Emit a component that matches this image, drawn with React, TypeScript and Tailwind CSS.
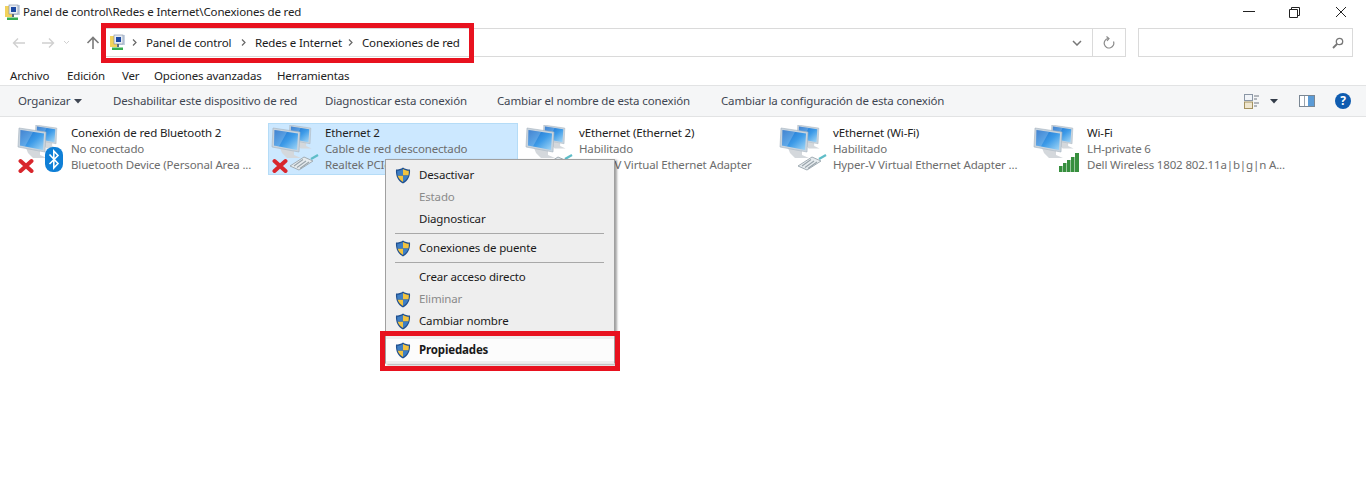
import React from "react";

type Badge = "bluetooth" | "plug" | "wifi";

interface Connection {
    name: string;
    status: string;
    device: string;
    failed: boolean;
    badge: Badge;
    selected?: boolean;
}

const connections: Connection[] = [
    { name: "Conexión de red Bluetooth 2", status: "No conectado", device: "Bluetooth Device (Personal Area ...", failed: true, badge: "bluetooth" },
    { name: "Ethernet 2", status: "Cable de red desconectado", device: "Realtek PCIe GbE Family Controller", failed: true, badge: "plug", selected: true },
    { name: "vEthernet (Ethernet 2)", status: "Habilitado", device: "Hyper-V Virtual Ethernet Adapter", failed: false, badge: "plug" },
    { name: "vEthernet (Wi-Fi)", status: "Habilitado", device: "Hyper-V Virtual Ethernet Adapter ...", failed: false, badge: "plug" },
    { name: "Wi-Fi", status: "LH-private 6", device: "Dell Wireless 1802 802.11a|b|g|n A...", failed: false, badge: "wifi" },
];

const Monitor: React.FC<{ x: number; y: number; s: number; id: string }> = ({ x, y, s, id }) => (
    <g transform={`translate(${x} ${y}) scale(${s})`}>
        <path d="M8 20 L22 23 L22 27 L29 30 L15 30 L10 25 Z" fill="#d4d8dc" />
        <path d="M1 0 L28 4 L27 24 L0 19 Z" fill="#c9d4de" stroke="#a5b2bd" strokeWidth="0.6" />
        <path d="M2.5 2 L26 5.5 L25 22 L2 17.5 Z" fill={`url(#${id})`} />
        <path d="M2.5 2 L15 4 L7 18.5 L2 17.5 Z" fill="#ffffff" opacity="0.2" />
    </g>
);

const NetworkIcon: React.FC<{ failed: boolean; badge: Badge; uid: string }> = ({ failed, badge, uid }) => (
    <svg width="48" height="48" viewBox="0 0 48 48" className="shrink-0">
        <defs>
            <linearGradient id={`scr${uid}`} x1="0" y1="0" x2="1" y2="1">
                <stop offset="0" stopColor="#1464c4" />
                <stop offset="0.55" stopColor="#3d9be8" />
                <stop offset="1" stopColor="#a6d8f6" />
            </linearGradient>
        </defs>
        <Monitor x={18} y={0} s={0.78} id={`scr${uid}`} />
        <Monitor x={1} y={3} s={1} id={`scr${uid}`} />
        {badge === "bluetooth" && (
            <g>
                <rect x="28" y="22" width="18" height="25" rx="8" fill="#0f7fd6" />
                <path d="M32.5 29.5 L41 38.5 L36.8 43 L36.8 26 L41 30.5 L32.5 39" fill="none" stroke="#ffffff" strokeWidth="1.6" />
            </g>
        )}
        {badge === "plug" && (
            <g>
                <path d="M19 41 L28 45 L42 36 L33 32 Z" fill="#e6ebee" stroke="#a2adb4" strokeWidth="1" />
                <path d="M23 41 L32 34.5 M26 42.5 L35 36 M29 43.5 L38 37" stroke="#9aa5ac" strokeWidth="1.2" />
                <path d="M40 34 L47 30" stroke="#5fbdc8" strokeWidth="2.2" />
            </g>
        )}
        {badge === "wifi" && (
            <g fill="#378f3e">
                <rect x="26" y="41" width="3.5" height="6" />
                <rect x="30" y="38" width="3.5" height="9" />
                <rect x="34" y="35" width="3.5" height="12" />
                <rect x="38" y="32" width="3.5" height="15" />
                <rect x="42" y="28" width="4" height="19" />
            </g>
        )}
        {failed && (
            <path d="M3.5 36 L14.5 46 M14.5 36 L3.5 46" stroke="#d8262c" strokeWidth="4" strokeLinecap="round" />
        )}
    </svg>
);

const FolderIcon: React.FC = () => (
    <svg width="17" height="17" viewBox="0 0 17 17">
        <rect x="1" y="2" width="8" height="11" fill="#f2d25c" />
        <rect x="10" y="1" width="6" height="10" fill="#c7d3e3" />
        <rect x="5" y="1" width="9" height="9" fill="#e7ecf3" stroke="#7d8ba0" strokeWidth="0.6" />
        <rect x="7" y="3" width="5" height="5" fill="#1c49a3" />
        <path d="M8 10 h2 v3 h-2 Z" fill="#5c6a7c" />
        <rect x="3" y="13.5" width="11" height="2.5" fill="#35ad4f" />
    </svg>
);

const Shield: React.FC = () => (
    <svg width="16" height="17" viewBox="0 0 16 17" className="shrink-0">
        <path d="M8 0.5 C10 2 12.5 2.5 15 2.5 C15.5 9 13 14 8 16.5 C3 14 0.5 9 1 2.5 C3.5 2.5 6 2 8 0.5 Z" fill="#20508f" />
        <path d="M8 2 C9.8 3.2 11.8 3.7 13.8 3.8 C13.9 5.5 13.8 7 13.4 8.5 L8 8.5 Z" fill="#f2c33f" />
        <path d="M2.6 8.5 L8 8.5 L8 15 C5 13.3 3.3 11 2.6 8.5 Z" fill="#f2c33f" />
        <path d="M8 2 C6.2 3.2 4.2 3.7 2.2 3.8 C2.1 5.5 2.2 7 2.6 8.5 L8 8.5 Z" fill="#3f7fc4" />
        <path d="M13.4 8.5 L8 8.5 L8 15 C11 13.3 12.7 11 13.4 8.5 Z" fill="#3f7fc4" />
    </svg>
);

const Crumb: React.FC = () => (
    <svg width="5" height="7" viewBox="0 0 5 7" className="shrink-0">
        <path d="M1 0.5 L4 3.5 L1 6.5" fill="none" stroke="#666" strokeWidth="1.2" />
    </svg>
);

const MenuRow: React.FC<{ label: string; shield?: boolean; disabled?: boolean }> = ({ label, shield, disabled }) => (
    <div className="flex h-[22px] items-center">
        <div className="flex w-[33px] justify-end pr-[8px]">{shield && <Shield />}</div>
        <span className={disabled ? "text-[#8a8a8a]" : "text-[#1a1a1a]"}>{label}</span>
    </div>
);

const Separator: React.FC = () => (
    <div className="flex h-[7px] items-center pr-[10px] pl-[9px]">
        <div className="h-px w-full bg-[#a8a8a8]" />
    </div>
);

export default function App() {
    return (
        <div className="relative h-[498px] w-[1366px] overflow-hidden bg-white font-['Noto_Sans',sans-serif] text-[11.5px] leading-4 tracking-[-0.15px] text-[#222]">
            {/* title bar */}
            <div className="flex h-[24px] items-center pl-[4px]">
                <FolderIcon />
                <span className="ml-[2px]">Panel de control\Redes e Internet\Conexiones de red</span>
                <div className="ml-auto flex items-center pr-[19px]">
                    <svg width="12" height="12" viewBox="0 0 12 12">
                        <path d="M0 5.5 H12" stroke="#222" strokeWidth="1" />
                    </svg>
                    <svg width="11" height="11" viewBox="0 0 11 11" className="ml-[34px]">
                        <path d="M0.5 2.5 H8.5 V10.5 H0.5 Z M2.5 2.5 V0.5 H10.5 V8.5 H8.5" fill="none" stroke="#222" />
                    </svg>
                    <svg width="12" height="12" viewBox="0 0 12 12" className="ml-[35px]">
                        <path d="M1 1 L11 11 M11 1 L1 11" stroke="#222" strokeWidth="1" />
                    </svg>
                </div>
            </div>

            {/* address row */}
            <div className="mt-[4px] flex h-[29px] items-center">
                <div className="flex w-[104px] items-center">
                    <svg width="14" height="12" viewBox="0 0 14 12" className="ml-[12px]">
                        <path d="M13 6 H2 M6 1.5 L1.5 6 L6 10.5" fill="none" stroke="#d0d0d0" strokeWidth="1.4" />
                    </svg>
                    <svg width="14" height="12" viewBox="0 0 14 12" className="ml-[15px]">
                        <path d="M1 6 H12 M8 1.5 L12.5 6 L8 10.5" fill="none" stroke="#d0d0d0" strokeWidth="1.4" />
                    </svg>
                    <svg width="7" height="5" viewBox="0 0 7 5" className="ml-[8px]">
                        <path d="M1 1 L3.5 3.5 L6 1" fill="none" stroke="#d0d0d0" />
                    </svg>
                    <svg width="14" height="13" viewBox="0 0 14 13" className="ml-[16px]">
                        <path d="M7 13 V2 M1.5 7 L7 1.5 L12.5 7" fill="none" stroke="#7b7b7b" strokeWidth="1.6" />
                    </svg>
                </div>
                <div className="flex h-full w-[1022px] items-center border border-[#dadada]">
                    <div className="ml-[4px] flex items-center">
                        <FolderIcon />
                    </div>
                    <div className="ml-[6px]"><Crumb /></div>
                    <span className="ml-[9px] w-[95px] text-[#1a1a1a]">Panel de control</span>
                    <Crumb />
                    <span className="ml-[9px] w-[93px] text-[#1a1a1a]">Redes e Internet</span>
                    <Crumb />
                    <span className="ml-[9px] text-[#1a1a1a]">Conexiones de red</span>
                    <svg width="10" height="6" viewBox="0 0 10 6" className="ml-auto mr-[10px]">
                        <path d="M1 1 L5 5 L9 1" fill="none" stroke="#777" strokeWidth="1.5" />
                    </svg>
                    <div className="flex h-full w-[33px] items-center justify-center border-l border-[#dadada]">
                        <svg width="12" height="13" viewBox="0 0 12 13">
                            <path d="M5 2.5 A4.8 4.8 0 1 0 10.5 5.5 M3.5 0.5 L6 2.5 L4 5" fill="none" stroke="#8a8a8a" strokeWidth="1.2" />
                        </svg>
                    </div>
                </div>
                <div className="ml-[12px] flex h-full w-[215px] items-center justify-end border border-[#dadada] pr-[8px]">
                    <svg width="12" height="12" viewBox="0 0 12 12">
                        <circle cx="7.5" cy="4.5" r="3.2" fill="none" stroke="#777" strokeWidth="1.3" />
                        <path d="M5 7 L1 11" stroke="#777" strokeWidth="1.8" />
                    </svg>
                </div>
            </div>

            {/* menu bar */}
            <div className="mt-[9px] flex h-[19px] items-center pl-[10px] text-[#222]">
                <span className="w-[57px]">Archivo</span>
                <span className="w-[55px]">Edición</span>
                <span className="w-[32px]">Ver</span>
                <span className="w-[123px]">Opciones avanzadas</span>
                <span>Herramientas</span>
            </div>

            {/* toolbar */}
            <div className="flex h-[32px] items-center border-y border-[#e2e3e4] bg-[#f5f6f7] pl-[18px] text-[#3f4652]">
                <span className="w-[56px]">Organizar</span>
                <svg width="8" height="5" viewBox="0 0 8 5">
                    <path d="M0 0 H8 L4 4.5 Z" fill="#3f4652" />
                </svg>
                <span className="ml-[31px] w-[212px]">Deshabilitar este dispositivo de red</span>
                <span className="w-[172px]">Diagnosticar esta conexión</span>
                <span className="w-[224px]">Cambiar el nombre de esta conexión</span>
                <span>Cambiar la configuración de esta conexión</span>
                <div className="ml-auto flex items-center pr-[15px]">
                    <svg width="16" height="15" viewBox="0 0 16 15">
                        <rect x="0.5" y="0.5" width="8" height="6" fill="#f1f4f8" stroke="#8a96a5" />
                        <rect x="0.5" y="8" width="8" height="6.5" fill="#efe6cf" stroke="#a3915f" />
                        <path d="M10 2 H15 M10 5 H13 M10 9 H15 M10 12 H13" stroke="#6f7782" />
                    </svg>
                    <svg width="8" height="5" viewBox="0 0 8 5" className="ml-[10px]">
                        <path d="M0 0 H8 L4 4.5 Z" fill="#333c49" />
                    </svg>
                    <svg width="16" height="12" viewBox="0 0 16 12" className="ml-[21px]">
                        <rect x="0.5" y="0.5" width="15" height="11" fill="#ffffff" stroke="#7a8794" />
                        <rect x="9" y="1" width="6" height="10" fill="#5b9bd6" />
                        <path d="M5.5 1 V11" stroke="#9aa5b0" />
                    </svg>
                    <div className="ml-[20px] flex h-[16px] w-[16px] items-center justify-center rounded-full bg-[#0f5cb0] text-[12px] font-bold text-white">?</div>
                </div>
            </div>

            {/* connections */}
            <div className="flex pt-[6px] pl-[16px]">
                {connections.map((c, i) => (
                    <div key={c.name} className="w-[254px] shrink-0">
                        <div className={`-ml-[2px] flex h-[52px] w-[250px] items-center border pl-[2px] ${c.selected ? "border-[#b5dcf7] bg-[#cce8ff]" : "border-transparent"}`}>
                            <NetworkIcon failed={c.failed} badge={c.badge} uid={String(i)} />
                            <div className="ml-[6px] min-w-0 whitespace-nowrap">
                                <div className="text-[#222]">{c.name}</div>
                                <div className="text-[#6d6d6d]">{c.status}</div>
                                <div className="text-[#6d6d6d]">{c.device}</div>
                            </div>
                        </div>
                    </div>
                ))}
            </div>

            {/* context menu */}
            <div className="absolute top-[159px] left-[385px] h-[205px] w-[230px] border border-[#a0a0a0] border-b-[#e8e8e8] bg-[#eeeeee] pt-[4px] shadow-[2px_1px_2px_rgba(0,0,0,0.35)]">
                <MenuRow label="Desactivar" shield />
                <MenuRow label="Estado" disabled />
                <MenuRow label="Diagnosticar" />
                <Separator />
                <MenuRow label="Conexiones de puente" shield />
                <Separator />
                <MenuRow label="Crear acceso directo" />
                <MenuRow label="Eliminar" shield disabled />
                <MenuRow label="Cambiar nombre" shield />
                <div className="mt-[7px] bg-[#fcfcfc] font-bold">
                    <MenuRow label="Propiedades" shield />
                </div>
            </div>

            {/* red highlights */}
            <div className="absolute top-[23px] left-[101px] h-[40px] w-[373px] border-[5px] border-[#e8121f]" />
            <div className="absolute top-[331px] left-[380px] h-[40px] w-[240px] border-[5px] border-[#e8121f]" />
        </div>
    );
}
